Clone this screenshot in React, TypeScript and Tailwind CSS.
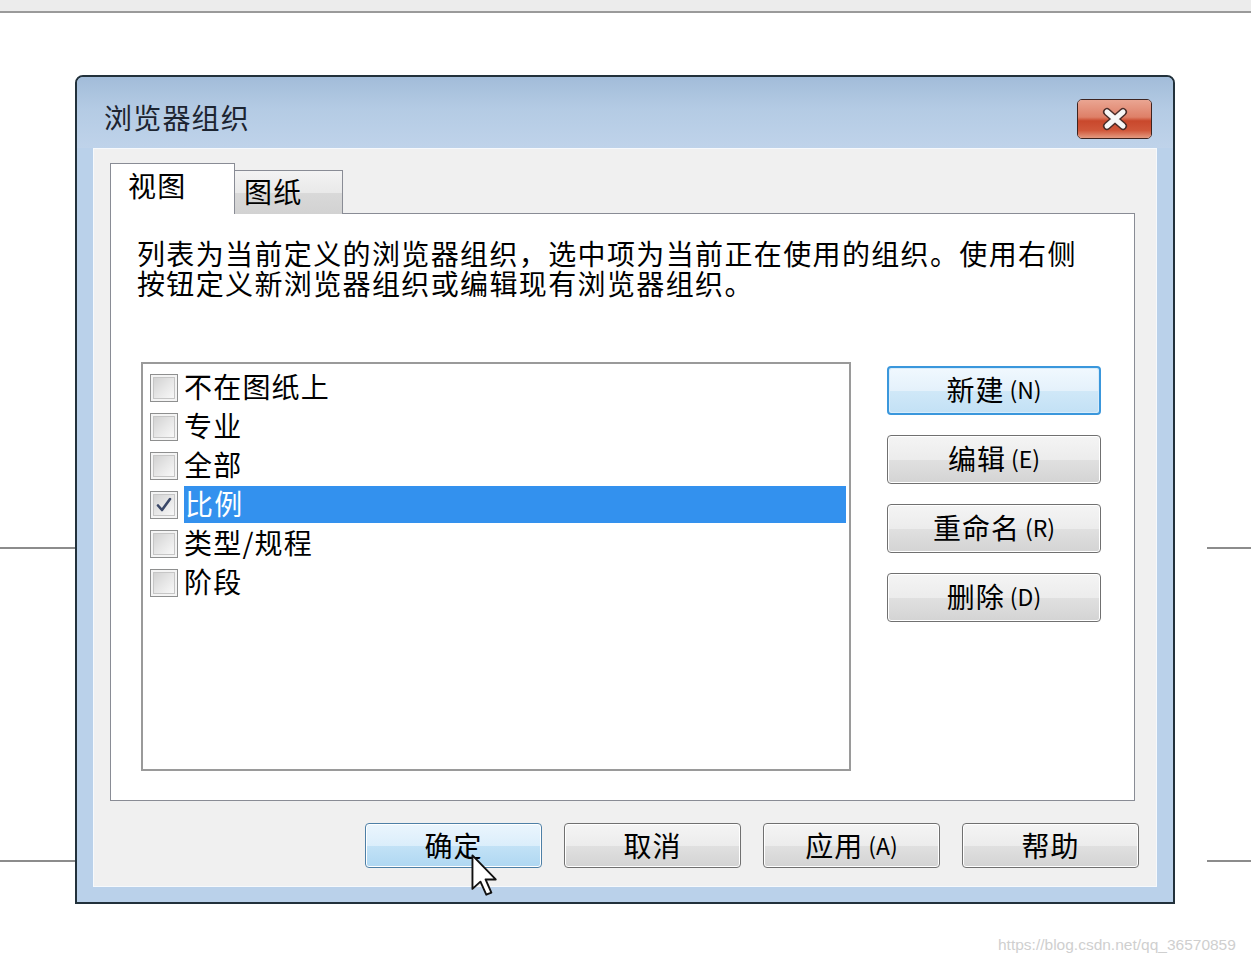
import React from "react";

const FONT = '"Noto Sans CJK SC", "Liberation Sans", sans-serif';

function Checkbox({ checked }: { checked?: boolean }) {
  return (
    <div className="w-[28px] h-[28px] shrink-0 border border-[#8e8f8f] bg-[#f4f4f4] p-[2px]">
      <div className="w-full h-full border border-[#c6c6c6] bg-[linear-gradient(135deg,#d2d2d2_0%,#e6e6e6_50%,#f8f8f8_100%)] flex items-center justify-center">
        {checked && (
          <svg width="18" height="18" viewBox="0 0 18 18">
            <path d="M3 9.5 L7 14 L15 3" fill="none" stroke="#3b4868" strokeWidth="2.6" strokeLinecap="round" strokeLinejoin="round" />
          </svg>
        )}
      </div>
    </div>
  );
}

function Row({ label, checked, selected }: { label: string; checked?: boolean; selected?: boolean }) {
  return (
    <div className="h-[39px] flex items-center pl-[7px] pr-[3px]">
      <Checkbox checked={checked} />
      <div
        className={
          selected
            ? "ml-[6px] flex-1 h-[37px] flex items-center bg-[#3391ee] text-white pl-[1px]"
            : "ml-[6px] flex-1 h-[37px] flex items-center text-black"
        }
      >
        <span className="text-[28px] leading-[30px] tracking-[1.2px] -mt-[3px]">{label}</span>
      </div>
    </div>
  );
}

function SideButton({ label, hot, isDefault }: { label: string; hot: string; isDefault?: boolean }) {
  return (
    <div
      className={
        isDefault
          ? "h-[49px] w-[214px] rounded-[4px] border-2 border-[#3a97dc] p-px bg-[#d8ecfa]"
          : "h-[49px] w-[214px] rounded-[4px] border border-[#707070] p-px bg-white"
      }
    >
      <div
        className={
          isDefault
            ? "h-full w-full rounded-[2px] flex items-center justify-center bg-[linear-gradient(to_bottom,#f0f8fe_0%,#e4f1fb_50%,#d0e8f8_51%,#c3e1f5_100%)]"
            : "h-full w-full rounded-[2px] flex items-center justify-center bg-[linear-gradient(to_bottom,#f4f4f4_0%,#ececec_50%,#e0e0e0_51%,#d4d4d4_100%)]"
        }
      >
        <span className="text-[28px] leading-[30px] tracking-[1px] text-black -mt-[3px]">{label}</span>
        <span className="text-[23px] leading-[30px] ml-[5px] text-black -mt-[3px]">({hot})</span>
      </div>
    </div>
  );
}

function BottomButton({ label, hot, hover }: { label: string; hot?: string; hover?: boolean }) {
  return (
    <div
      className={
        hover
          ? "h-[45px] w-[177px] rounded-[4px] border border-[#4d7fa6] p-px bg-white"
          : "h-[45px] w-[177px] rounded-[4px] border border-[#707070] p-px bg-white"
      }
    >
      <div
        className={
          hover
            ? "h-full w-full rounded-[2px] flex items-center justify-center bg-[linear-gradient(to_bottom,#eaf5fd_0%,#dbeefb_50%,#c2e2f6_51%,#b0d8f2_100%)]"
            : "h-full w-full rounded-[2px] flex items-center justify-center bg-[linear-gradient(to_bottom,#f4f4f4_0%,#ececec_50%,#e0e0e0_51%,#d4d4d4_100%)]"
        }
      >
        <span className="text-[28px] leading-[30px] tracking-[1px] text-black -mt-[2px]">{label}</span>
        {hot && <span className="text-[23px] leading-[30px] ml-[5px] text-black -mt-[2px]">({hot})</span>}
      </div>
    </div>
  );
}

export default function App() {
  return (
    <div className="relative w-[1251px] h-[965px] bg-white overflow-hidden" style={{ fontFamily: FONT }}>
      {/* top page bar */}
      <div className="h-[13px] bg-[#ececec] border-b-2 border-[#9a9a9a]" />

      {/* background lines behind dialog */}
      <div className="absolute left-0 top-[547px] w-[80px] h-[2px] bg-[#8c8c8c]" />
      <div className="absolute left-[1207px] top-[547px] w-[44px] h-[2px] bg-[#8c8c8c]" />
      <div className="absolute left-0 top-[860px] w-[80px] h-[2px] bg-[#8c8c8c]" />
      <div className="absolute left-[1207px] top-[860px] w-[44px] h-[2px] bg-[#8c8c8c]" />

      {/* dialog */}
      <div className="relative ml-[75px] mt-[62px] w-[1100px] h-[829px] border-2 border-[#22313b] rounded-t-[8px] bg-[#bad1ea] flex flex-col overflow-hidden">
        {/* title bar */}
        <div className="h-[71px] shrink-0 flex items-start justify-between pl-[27px] pr-[21px] bg-[linear-gradient(to_bottom,#a2bcd9_0%,#b4cbe4_45%,#bfd3ea_100%)]">
          <div className="mt-[25px] text-[28px] leading-[30px] tracking-[1.2px] text-[#1c2430]">浏览器组织</div>
          <div className="mt-[22px] w-[75px] h-[40px] rounded-[5px] border border-[#3d2420] overflow-hidden">
            <div className="w-full h-full flex items-center justify-center bg-[linear-gradient(to_bottom,#eaa592_0%,#de8068_45%,#c9482c_55%,#d0573a_80%,#e49a80_100%)]">
              <svg width="34" height="24" viewBox="0 0 34 24">
                <path d="M9 5 L25 19 M25 5 L9 19" stroke="#4a2c28" strokeWidth="8" strokeLinecap="round" />
                <path d="M9 5 L25 19 M25 5 L9 19" stroke="#f7f7f7" strokeWidth="5" strokeLinecap="round" />
              </svg>
            </div>
          </div>
        </div>

        {/* body */}
        <div className="flex-1 px-[16px] pb-[15px] flex">
          <div className="flex-1 border border-[#f6f9fc] bg-[#f0f0f0] flex flex-col">
            <div className="pt-[14px] pl-[16px] pr-[21px]">
              {/* tabs */}
              <div className="flex items-end -mb-px relative z-10">
                <div className="w-[125px] h-[51px] bg-white border border-[#898c95] border-b-0 pl-[17px] pt-[6px]">
                  <span className="text-[28px] leading-[30px] tracking-[1.2px] text-black">视图</span>
                </div>
                <div className="w-[108px] h-[44px] border border-[#898c95] border-l-0 border-b-0 bg-[linear-gradient(to_bottom,#f3f3f3_0%,#e9e9e9_50%,#d9d9d9_51%,#d2d2d2_100%)] pl-[9px] pt-[5px]">
                  <span className="text-[28px] leading-[30px] tracking-[1.2px] text-black">图纸</span>
                </div>
              </div>
              {/* panel */}
              <div className="h-[588px] bg-white border border-[#898c95] flex flex-col">
                <p className="pl-[26px] pt-[24px] text-[28px] leading-[30px] tracking-[1.37px] text-black">
                  列表为当前定义的浏览器组织，选中项为当前正在使用的组织。使用右侧
                  <br />
                  按钮定义新浏览器组织或编辑现有浏览器组织。
                </p>
                <div className="mt-[64px] pl-[30px] flex items-start">
                  <div className="w-[710px] h-[409px] border-2 border-[#9a9a9a] bg-white pt-[4px]">
                    <Row label="不在图纸上" />
                    <Row label="专业" />
                    <Row label="全部" />
                    <Row label="比例" checked selected />
                    <Row label="类型/规程" />
                    <Row label="阶段" />
                  </div>
                  <div className="ml-[36px] pt-[4px] flex flex-col gap-[20px]">
                    <SideButton label="新建" hot="N" isDefault />
                    <SideButton label="编辑" hot="E" />
                    <SideButton label="重命名" hot="R" />
                    <SideButton label="删除" hot="D" />
                  </div>
                </div>
              </div>
            </div>
            {/* bottom buttons */}
            <div className="mt-[22px] pr-[17px] flex justify-end gap-[22px]">
              <BottomButton label="确定" hover />
              <BottomButton label="取消" />
              <BottomButton label="应用" hot="A" />
              <BottomButton label="帮助" />
            </div>
          </div>
        </div>
      </div>

      {/* mouse cursor */}
      <svg className="absolute left-[471px] top-[854px]" width="32" height="48" viewBox="0 0 22 33">
        <path d="M1 1 L1 24 L6.5 19 L10.5 28 L14 26.5 L10 17.5 L17 17.5 Z" fill="#ffffff" stroke="#111111" strokeWidth="1.3" strokeLinejoin="round" />
      </svg>

      {/* watermark */}
      <div className="absolute left-[998px] top-[935px] text-[15.5px] leading-[20px] text-[#cfcfcf]" style={{ fontFamily: '"Liberation Sans", Arial, sans-serif' }}>
        https://blog.csdn.net/qq_36570859
      </div>
    </div>
  );
}
